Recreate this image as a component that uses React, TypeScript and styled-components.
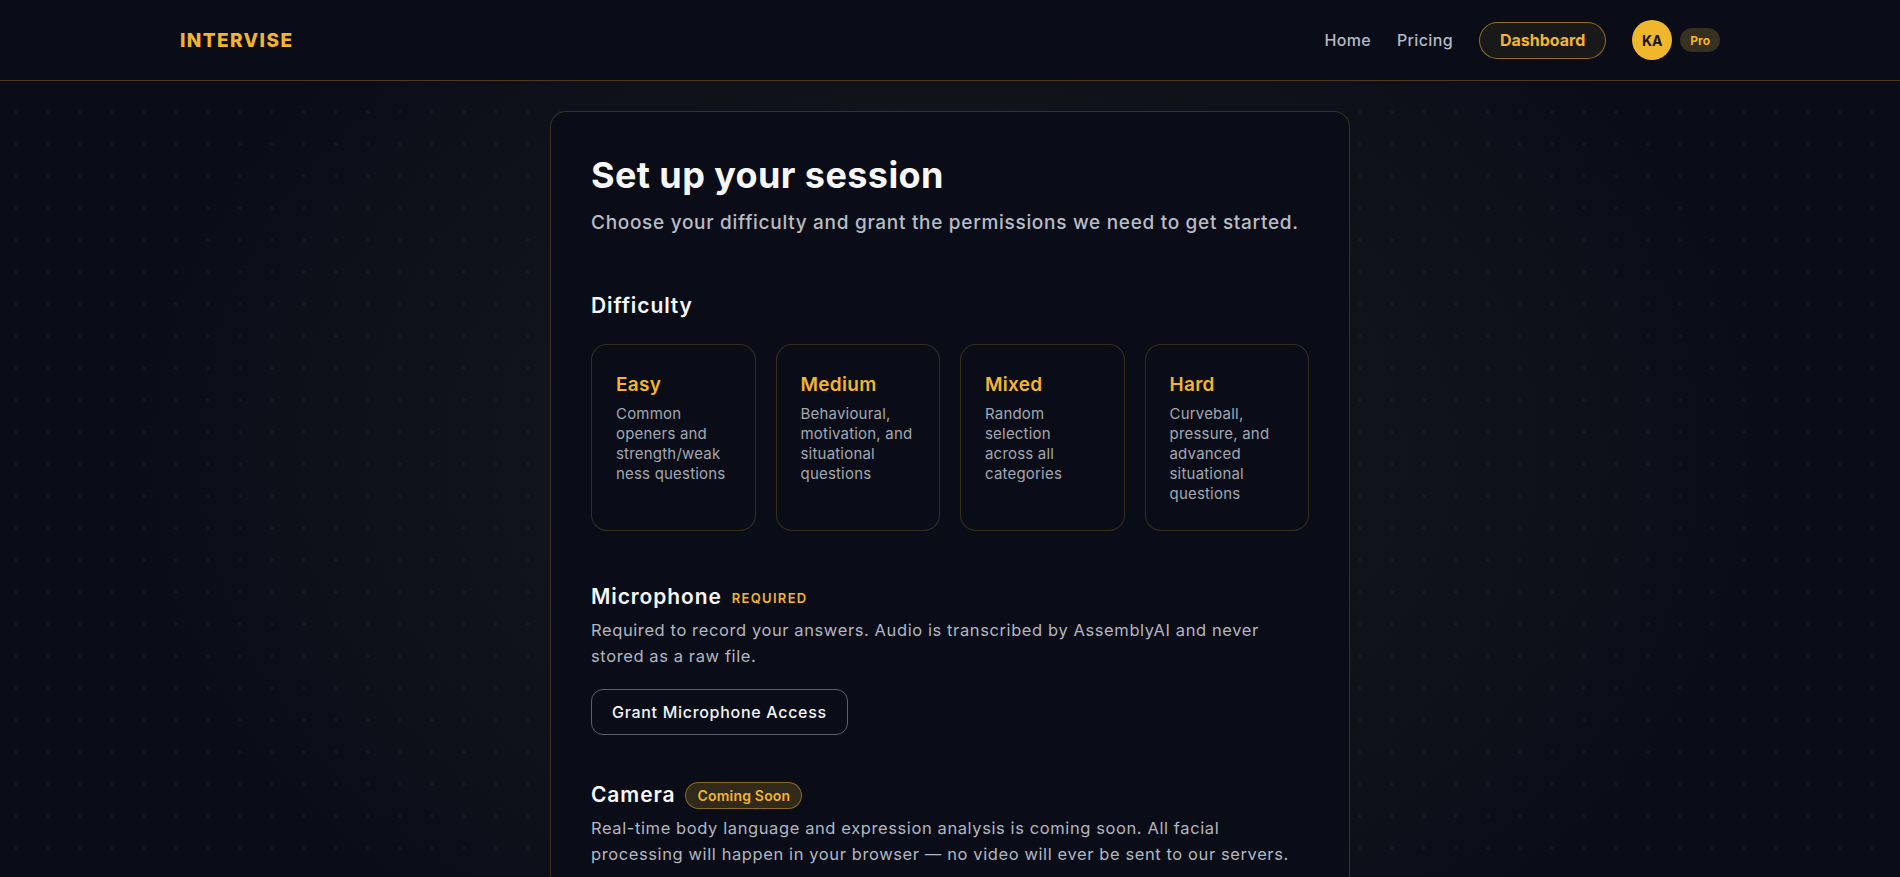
import React from 'react';
import styled, { createGlobalStyle } from 'styled-components';

const GlobalStyle = createGlobalStyle`
  * { box-sizing: border-box; }
  body {
    margin: 0;
    background: #0a0d18;
    color: #f4f5f7;
    font-family: Inter, "Noto Sans", sans-serif;
    -webkit-font-smoothing: antialiased;
  }
`;

const gold = '#f2b52b';

// Page background: dotted grid plus a soft warm glow behind the card
const Page = styled.div`
  min-height: 100vh;
  background:
    radial-gradient(ellipse 840px 620px at 50% 50%, rgba(242, 200, 120, 0.065), rgba(242, 200, 120, 0.035) 45%, transparent 100%),
    radial-gradient(circle at 16px 16px, rgba(255, 255, 255, 0.065) 1px, transparent 1.6px) 0 0 / 32px 32px,
    #0a0d18;
`;

const Header = styled.header`
  height: 81px;
  background: #0a0d18;
  border-bottom: 1px solid rgba(242, 181, 43, 0.28);
`;

const HeaderInner = styled.div`
  max-width: 1540px;
  height: 100%;
  margin: 0 auto;
  display: flex;
  align-items: center;
  justify-content: space-between;
`;

const Logo = styled.div`
  font-size: 19px;
  font-weight: 800;
  letter-spacing: 1.4px;
  color: ${gold};
`;

const Nav = styled.nav`
  display: flex;
  align-items: center;
  gap: 26px;
`;

const NavLink = styled.a`
  font-size: 16px;
  font-weight: 500;
  letter-spacing: 0.35px;
  color: #b5b9c4;
  text-decoration: none;
`;

const DashboardButton = styled.a`
  height: 37px;
  padding: 0 20px;
  display: inline-flex;
  align-items: center;
  border-radius: 999px;
  border: 1px solid rgba(242, 181, 43, 0.55);
  background: rgba(242, 181, 43, 0.07);
  color: ${gold};
  font-size: 16px;
  font-weight: 700;
  text-decoration: none;
`;

const Account = styled.div`
  display: flex;
  align-items: center;
  gap: 8px;
`;

const Avatar = styled.div`
  width: 40px;
  height: 40px;
  border-radius: 50%;
  background: #f0b72c;
  color: #14120c;
  display: grid;
  place-items: center;
  font-size: 14px;
  font-weight: 700;
`;

const PlanBadge = styled.span`
  height: 24px;
  padding: 0 10px;
  display: inline-flex;
  align-items: center;
  border-radius: 999px;
  background: #363020;
  color: ${gold};
  font-size: 12px;
  font-weight: 700;
`;

const Main = styled.main`
  padding-top: 30px;
`;

const Card = styled.section`
  width: 800px;
  margin: 0 auto;
  padding: 42px 40px 40px;
  border: 1px solid rgba(242, 181, 43, 0.22);
  border-radius: 16px;
  background: #0a0d18;
`;

const Title = styled.h1`
  margin: 0;
  font-size: 36px;
  line-height: 43px;
  font-weight: 700;
  letter-spacing: 0.4px;
  color: #f7f7f8;
`;

const Subtitle = styled.p`
  margin: 12px 0 0;
  font-size: 19px;
  line-height: 28px;
  font-weight: 500;
  color: #b9bcc6;
  letter-spacing: 0.7px;
`;

const SectionTitle = styled.h2<{ $top: number }>`
  margin: ${p => p.$top}px 0 0;
  font-size: 21px;
  line-height: 28px;
  font-weight: 600;
  letter-spacing: 0.9px;
  color: #f7f7f8;
`;

const LevelGrid = styled.div`
  margin-top: 24px;
  display: grid;
  grid-template-columns: repeat(4, 1fr);
  gap: 20px;
`;

const Level = styled.button`
  padding: 26px 24px;
  text-align: left;
  font-family: inherit;
  border: 1px solid rgba(242, 181, 43, 0.2);
  border-radius: 16px;
  background: #0a0d18;
  cursor: pointer;
  display: flex;
  flex-direction: column;
  justify-content: flex-start;
  gap: 6px;
`;

const LevelName = styled.span`
  font-size: 19px;
  line-height: 27px;
  font-weight: 600;
  letter-spacing: 0.3px;
  color: ${gold};
`;

const LevelText = styled.span`
  font-size: 15px;
  line-height: 20px;
  color: #a3a7b0;
  letter-spacing: 0.2px;
  overflow-wrap: anywhere;
`;

const PermissionHead = styled.div<{ $top: number }>`
  margin-top: ${p => p.$top}px;
  display: flex;
  align-items: center;
  gap: 10px;
  height: 28px;
`;

const PermissionName = styled.h3`
  margin: 0;
  font-size: 21px;
  line-height: 28px;
  font-weight: 600;
  letter-spacing: 0.9px;
  color: #f7f7f8;
`;

const RequiredTag = styled.span`
  font-size: 13px;
  font-weight: 600;
  letter-spacing: 1.3px;
  color: ${gold};
  padding-top: 2px;
`;

const SoonBadge = styled.span`
  height: 27px;
  padding: 0 11px;
  display: inline-flex;
  align-items: center;
  border-radius: 999px;
  border: 1px solid rgba(242, 181, 43, 0.45);
  background: rgba(242, 181, 43, 0.17);
  color: ${gold};
  font-size: 14px;
  font-weight: 600;
  letter-spacing: 0.2px;
`;

const PermissionText = styled.p`
  margin: 7px 0 0;
  font-size: 16.5px;
  line-height: 25.6px;
  color: #b3b6c0;
  letter-spacing: 0.6px;
`;

const OutlineButton = styled.button`
  margin-top: 20px;
  height: 46px;
  padding: 0 20px;
  border: 1px solid #5a5f6b;
  border-radius: 12px;
  background: transparent;
  color: #f4f5f7;
  font-family: inherit;
  font-size: 16px;
  font-weight: 500;
  letter-spacing: 0.7px;
  cursor: pointer;
`;

// \u200B lets the long word wrap at the same spot on narrow cards
const levels = [
  { name: 'Easy', text: 'Common openers and strength/weak\u200Bness questions' },
  { name: 'Medium', text: 'Behavioural, motivation, and situational questions' },
  { name: 'Mixed', text: 'Random selection across all categories' },
  { name: 'Hard', text: 'Curveball, pressure, and advanced situational questions' },
];

export default function App() {
  return (
    <>
      <GlobalStyle />
      <Page>
        <Header>
          <HeaderInner>
            <Logo>INTERVISE</Logo>
            <Nav>
              <NavLink href="#">Home</NavLink>
              <NavLink href="#">Pricing</NavLink>
              <DashboardButton href="#">Dashboard</DashboardButton>
              <Account>
                <Avatar>KA</Avatar>
                <PlanBadge>Pro</PlanBadge>
              </Account>
            </Nav>
          </HeaderInner>
        </Header>

        <Main>
          <Card>
            <Title>Set up your session</Title>
            <Subtitle>Choose your difficulty and grant the permissions we need to get started.</Subtitle>

            <SectionTitle $top={55}>Difficulty</SectionTitle>
            <LevelGrid>
              {levels.map(l => (
                <Level key={l.name}>
                  <LevelName>{l.name}</LevelName>
                  <LevelText>{l.text}</LevelText>
                </Level>
              ))}
            </LevelGrid>

            <PermissionHead $top={52}>
              <PermissionName>Microphone</PermissionName>
              <RequiredTag>REQUIRED</RequiredTag>
            </PermissionHead>
            <PermissionText>
              Required to record your answers. Audio is transcribed by AssemblyAI and never stored as a raw file.
            </PermissionText>
            <OutlineButton>Grant Microphone Access</OutlineButton>

            <PermissionHead $top={46}>
              <PermissionName>Camera</PermissionName>
              <SoonBadge>Coming Soon</SoonBadge>
            </PermissionHead>
            <PermissionText>
              Real-time body language and expression analysis is coming soon. All facial processing will happen in
              your browser — no video will ever be sent to our servers.
            </PermissionText>
          </Card>
        </Main>
      </Page>
    </>
  );
}
